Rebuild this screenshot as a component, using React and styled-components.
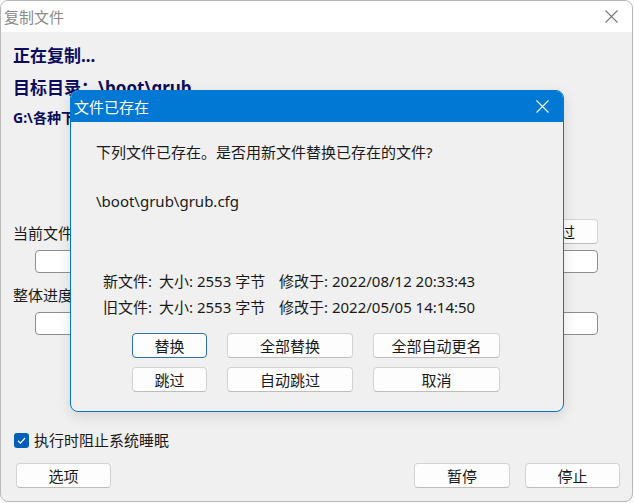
import styled, { createGlobalStyle, css } from "styled-components";

const GlobalStyle = createGlobalStyle`
  body {
    margin: 0;
    background: #fafafa;
    font-family: "Noto Sans", "Noto Sans CJK SC", sans-serif;
  }
`;

const Window = styled.div`
  position: relative;
  box-sizing: border-box;
  width: 633px;
  height: 502px;
  border: 1px solid #b9b9b9;
  border-radius: 8px;
  overflow: hidden;
  background: #f0f0f0;
  display: flex;
  flex-direction: column;
`;

const TitleBar = styled.div`
  height: 31px;
  flex: none;
  display: flex;
  align-items: center;
  background: ${(p) => (p.$active ? "#0078d4" : "#ffffff")};
`;

const TitleText = styled.span`
  flex: 1;
  padding-left: 3px;
  font-size: 15px;
  line-height: 20px;
  color: ${(p) => (p.$active ? "#ffffff" : "#8a8a8a")};
`;

const CloseBox = styled.div`
  width: 42px;
  height: 100%;
  display: flex;
  align-items: center;
  justify-content: center;
`;

const Body = styled.div`
  flex: 1;
  display: flex;
  flex-direction: column;
  padding: 0 12px;
`;

const Heading = styled.div`
  font-weight: 700;
  color: #0c0c5c;
  white-space: nowrap;
  font-size: ${(p) => (p.$small ? "14px" : "17px")};
  line-height: ${(p) => (p.$small ? "20px" : "24px")};
  margin-top: ${(p) => p.$mt}px;
`;

const Progress = styled.div`
  margin-right: 22px;
  display: flex;
  flex-direction: column;
`;

const LabelRow = styled.div`
  display: flex;
  align-items: flex-end;
  justify-content: space-between;
  margin-top: ${(p) => p.$mt}px;
`;

const Label = styled.span`
  font-size: 15px;
  line-height: 22px;
  color: #1a1a1a;
  white-space: nowrap;
`;

const Field = styled.div`
  box-sizing: border-box;
  height: 23px;
  margin: 6px 0 0 22px;
  background: #ffffff;
  border: 1px solid #8e8e8e;
  border-radius: 4px;
`;

const Button = styled.button`
  box-sizing: border-box;
  height: 25px;
  width: ${(p) => p.$w}px;
  padding: 0;
  background: #fdfdfd;
  border: 1px solid #d3d3d3;
  border-bottom-color: #bdbdbd;
  border-radius: 4px;
  font-family: inherit;
  font-size: 15px;
  line-height: 20px;
  color: #1a1a1a;
  ${(p) =>
    p.$focused &&
    css`
      border-color: #2f6fb4;
    `}
`;

const CheckRow = styled.div`
  display: flex;
  align-items: center;
  gap: 5px;
  margin-top: 94px;
  padding-left: 1px;
`;

const CheckBox = styled.span`
  width: 15px;
  height: 15px;
  border-radius: 3px;
  background: #005fb8;
  display: flex;
  align-items: center;
  justify-content: center;
`;

const Footer = styled.div`
  display: flex;
  align-items: center;
  gap: 15px;
  margin-top: 12px;
  padding-left: 3px;
`;

const Spacer = styled.div`
  flex: 1;
`;

const Dialog = styled.div`
  position: absolute;
  left: 69px;
  top: 89px;
  box-sizing: border-box;
  width: 494px;
  height: 322px;
  border: 1px solid #0078d4;
  border-radius: 8px;
  overflow: hidden;
  background: #f0f0f0;
  display: flex;
  flex-direction: column;
  box-shadow: 0 4px 14px rgba(0, 0, 0, 0.12);
`;

const DialogBody = styled.div`
  display: flex;
  flex-direction: column;
  padding-left: 25px;
  color: #1a1a1a;
  font-size: 15px;
`;

const Line = styled.div`
  line-height: 22px;
  white-space: nowrap;
  margin-top: ${(p) => p.$mt}px;
`;

const InfoTable = styled.div`
  display: grid;
  grid-template-columns: 56px 120px auto;
  grid-auto-rows: 26px;
  align-items: center;
  margin: 55px 0 0 7px;
  white-space: nowrap;
`;

const ButtonGrid = styled.div`
  display: grid;
  grid-template-columns: 75px 126px 127px;
  column-gap: 20px;
  row-gap: 9px;
  margin: 14px 0 0 36px;
`;

const CloseIcon = ({ color }) => (
  <svg width="13" height="13" viewBox="0 0 13 13">
    <path d="M0.5 0.5 L12.5 12.5 M12.5 0.5 L0.5 12.5" stroke={color} strokeWidth="1.1" />
  </svg>
);

const files = [
  { name: "新文件:", size: "大小: 2553 字节", time: "修改于: 2022/08/12 20:33:43" },
  { name: "旧文件:", size: "大小: 2553 字节", time: "修改于: 2022/05/05 14:14:50" },
];

const actions = [
  { text: "替换", focused: true },
  { text: "全部替换" },
  { text: "全部自动更名" },
  { text: "跳过" },
  { text: "自动跳过" },
  { text: "取消" },
];

export default function App() {
  return (
    <>
      <GlobalStyle />
      <Window>
        <TitleBar>
          <TitleText>复制文件</TitleText>
          <CloseBox>
            <CloseIcon color="#7a7a7a" />
          </CloseBox>
        </TitleBar>
        <Body>
          <Heading $mt={12}>正在复制...</Heading>
          <Heading $mt={8}>目标目录：\boot\grub</Heading>
          <Heading $small $mt={8}>G:\各种下载\grub</Heading>
          <Progress>
            <LabelRow $mt={91}>
              <Label>当前文件</Label>
              <Button $w={76}>跳过</Button>
            </LabelRow>
            <Field />
            <LabelRow $mt={11}>
              <Label>整体进度</Label>
            </LabelRow>
            <Field />
          </Progress>
          <CheckRow>
            <CheckBox>
              <svg width="11" height="11" viewBox="0 0 11 11">
                <path d="M2 5.8 L4.4 8.1 L9 3" fill="none" stroke="#ffffff" strokeWidth="1.2" />
              </svg>
            </CheckBox>
            <Label>执行时阻止系统睡眠</Label>
          </CheckRow>
          <Footer>
            <Button $w={95}>选项</Button>
            <Spacer />
            <Button $w={96}>暂停</Button>
            <Button $w={95}>停止</Button>
          </Footer>
        </Body>
        <Dialog>
          <TitleBar $active>
            <TitleText $active>文件已存在</TitleText>
            <CloseBox>
              <CloseIcon color="#ffffff" />
            </CloseBox>
          </TitleBar>
          <DialogBody>
            <Line $mt={19}>下列文件已存在。是否用新文件替换已存在的文件?</Line>
            <Line $mt={27}>\boot\grub\grub.cfg</Line>
            <InfoTable>
              {files.map((f) => (
                <>
                  <span>{f.name}</span>
                  <span>{f.size}</span>
                  <span>{f.time}</span>
                </>
              ))}
            </InfoTable>
            <ButtonGrid>
              {actions.map((a) => (
                <Button key={a.text} $focused={a.focused}>
                  {a.text}
                </Button>
              ))}
            </ButtonGrid>
          </DialogBody>
        </Dialog>
      </Window>
    </>
  );
}
